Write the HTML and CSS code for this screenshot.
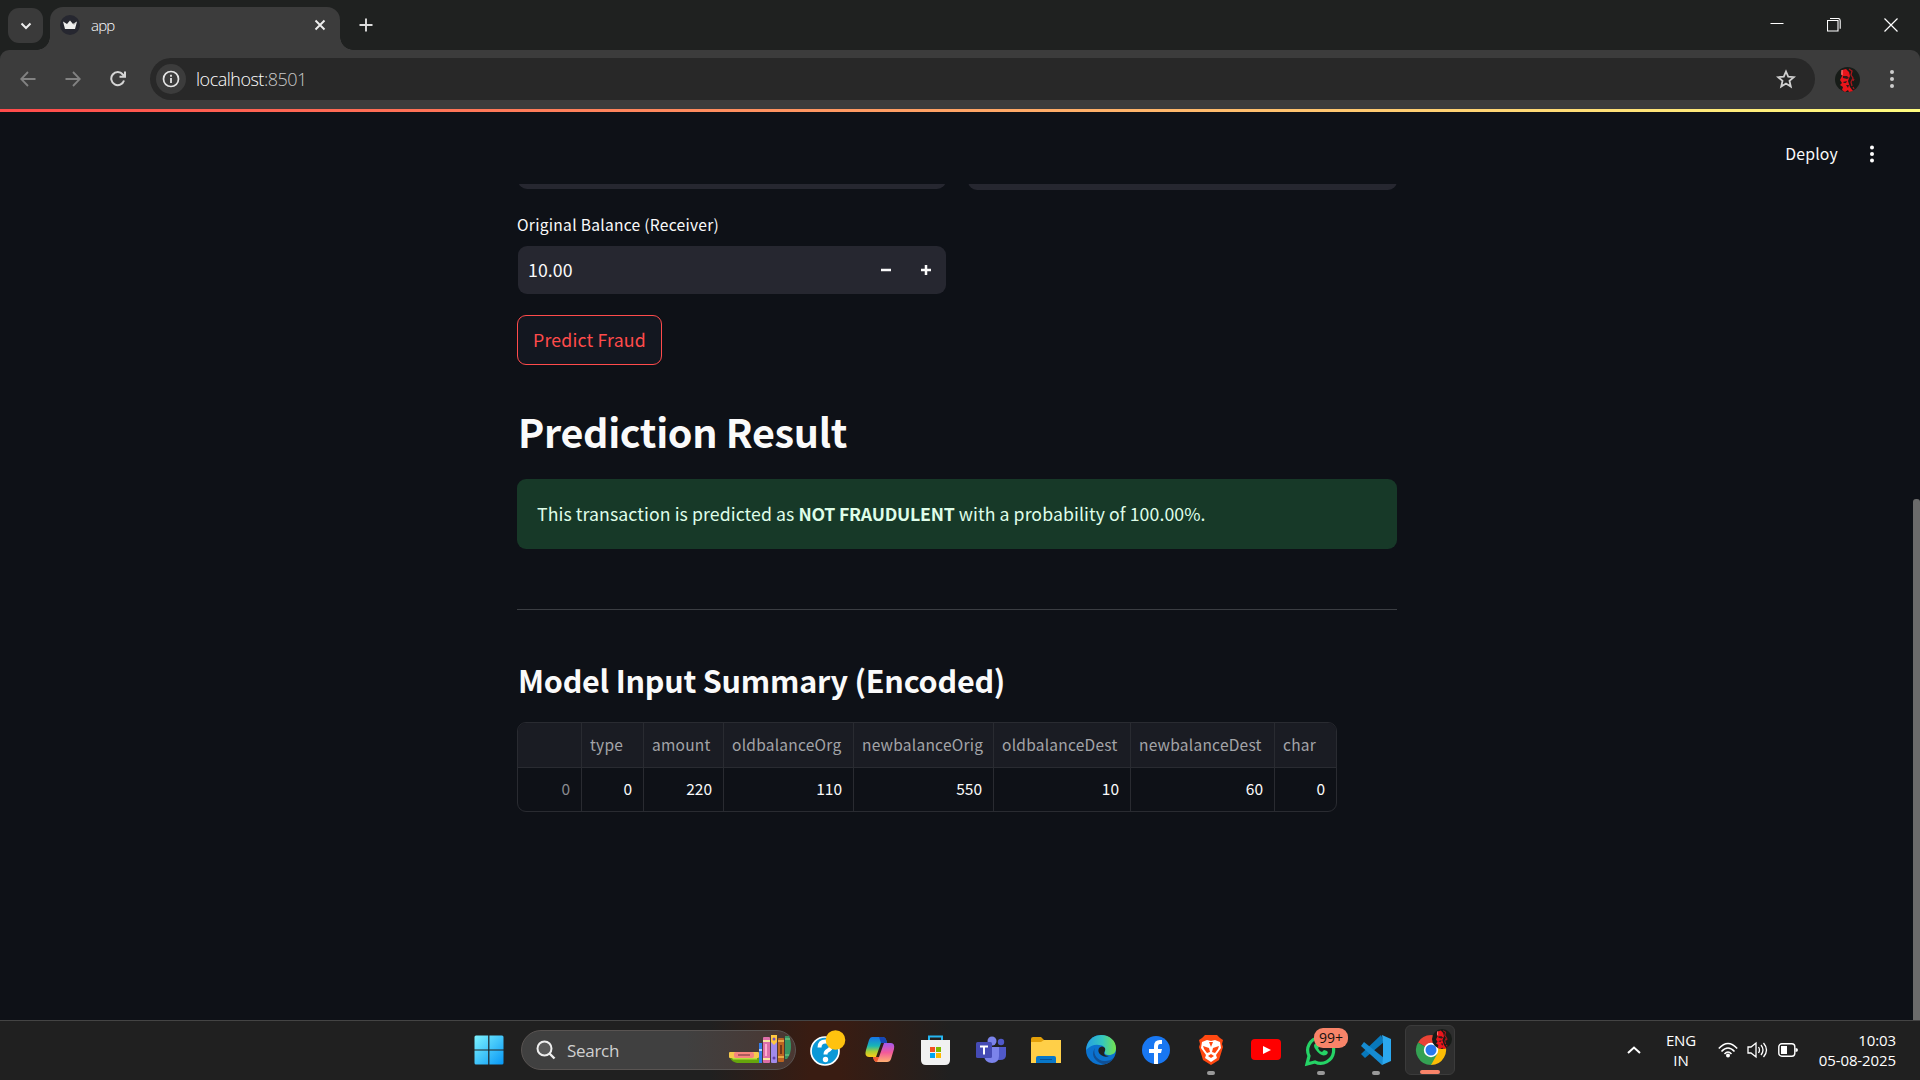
FILE: index.html
```html
<!DOCTYPE html>
<html lang="en">
<head>
<meta charset="utf-8">
<title>app</title>
<link rel="stylesheet" href="styles.css">
</head>
<body>
<header class="tabstrip">
  <button class="tab-search"><svg width="12" height="12" viewBox="0 0 12 12"><path d="M1.5 3.5 6 8l4.500-4.500" fill="none" stroke="#eee" stroke-width="2"/></svg></button>
  <div class="tab">
    <svg class="favicon" width="20" height="20" viewBox="0 0 20 20"><circle cx="10" cy="10" r="10" fill="#262730"/><path d="M3 6.500 7 9l3-3.500L13 9l4-2.500L15 14H5z" fill="#eee"/><path d="M10 5.500 13 9l4-2.500L14 10z" fill="#aaa"/></svg>
    <span class="tab-title">app</span>
    <svg width="12" height="12" viewBox="0 0 12 12"><path d="m1.500 1.500 9 9m0-9-9 9" stroke="#eee" stroke-width="1.900"/></svg>
  </div>
  <svg class="new-tab" width="14" height="14" viewBox="0 0 14 14"><path d="M7 .5v13M.5 7h13" stroke="#ddd" stroke-width="1.900"/></svg>
  <div class="window-controls">
    <svg width="14" height="14" viewBox="0 0 14 14"><path d="M.5 5.500h13" stroke="#fff" fill="none"/></svg>
    <svg width="14" height="14" viewBox="0 0 14 14"><path d="M.5 2.500h10.500v10.500H.5zM3 .5h8q2.200 0 2.200 2.200v8" stroke="#fff" stroke-width="1.100" fill="none"/></svg>
    <svg width="14" height="14" viewBox="0 0 14 14"><path d="m.5.500 13 13m0-13-13 13" stroke="#fff" stroke-width="1.200" fill="none"/></svg>
  </div>
</header>
<div class="toolbar-back">
<nav class="toolbar">
  <svg class="dim" width="16" height="16" viewBox="0 0 16 16"><path d="M15.500 8H1.500M8 1 1.200 8 8 15" fill="none" stroke="currentColor" stroke-width="1.800"/></svg>
  <svg class="dim" width="16" height="16" viewBox="0 0 16 16"><path d="M.5 8h14M8 1l6.800 7L8 15" fill="none" stroke="currentColor" stroke-width="1.800"/></svg>
  <svg width="16" height="16" viewBox="0 0 16 16"><path d="M14 9.500A6.500 6.500 0 1 1 12.800 3.500L14.500 5.300M15 .5v5.300H9.500" fill="none" stroke="#d5d5d5" stroke-width="2"/></svg>
  <div class="omnibox">
    <span class="site-info"><svg width="18" height="18" viewBox="0 0 18 18"><circle cx="9" cy="9" r="7.500" fill="none" stroke="#e4e4e4" stroke-width="1.700"/><path d="M9 8v5M9 4.800v2" stroke="#e4e4e4" stroke-width="1.800"/></svg></span>
    <span class="url">localhost<span class="port">:8501</span></span>
    <svg width="20" height="20" viewBox="0 0 20 20"><path d="m10 2.500 2.200 5.200 5.600.5-4.300 3.700 1.300 5.600-4.800-3-4.800 3 1.300-5.600L2.200 8.200l5.600-.5z" fill="none" stroke="#d0d0d0" stroke-width="1.800"/></svg>
  </div>
  <svg class="avatar" width="25" height="25" viewBox="0 0 25 25"><use href="#face"/></svg>
  <svg class="browser-menu" width="4" height="18" viewBox="0 0 4 18"><g fill="#ccc"><circle cx="2" cy="2" r="2"/><circle cx="2" cy="9" r="2"/><circle cx="2" cy="16" r="2"/></g></svg>
</nav>
</div>
<main class="page">
  <div class="decoration"></div>
  <div class="app-header">
    <span>Deploy</span>
    <svg width="4" height="18" viewBox="0 0 4 18"><g fill="#fff"><circle cx="2" cy="2.500" r="2"/><circle cx="2" cy="9" r="2"/><circle cx="2" cy="15.500" r="2"/></g></svg>
  </div>
  <div class="content">
    <div class="clipped-row"><div class="clipped"></div><div class="clipped second"></div></div>
    <label class="field-label">Original Balance (Receiver)</label>
    <div class="number-input"><span class="value">10.00</span>
      <svg width="10" height="10" viewBox="0 0 10 10"><path d="M0 5h10" stroke="#fafafa" stroke-width="2.500"/></svg>
      <svg width="10" height="10" viewBox="0 0 10 10"><path d="M0 5h10M5 0v10" stroke="#fafafa" stroke-width="2.500"/></svg>
    </div>
    <button class="predict">Predict Fraud</button>
    <h2 class="result-title">Prediction Result</h2>
    <div class="success"><span>This transaction is predicted as <strong>NOT FRAUDULENT</strong> with a probability of 100.00%.</span></div>
    <hr class="rule">
    <h3 class="summary-title">Model Input Summary (Encoded)</h3>
    <div class="table">
      <div class="row head"><span></span><span>type</span><span>amount</span><span>oldbalanceOrg</span><span>newbalanceOrig</span><span>oldbalanceDest</span><span>newbalanceDest</span><span>char</span></div>
      <div class="row data"><span>0</span><span>0</span><span>220</span><span>110</span><span>550</span><span>10</span><span>60</span><span>0</span></div>
    </div>
  </div>
  <div class="scroll-thumb"></div>
</main>
<footer class="taskbar">
  <div class="launcher">
    <svg class="start" width="30" height="30" viewBox="0 0 30 30"><defs><linearGradient id="win" x1="0" y1="0" x2="1" y2="1"><stop stop-color="#7df3ff"/><stop offset="1" stop-color="#0797f5"/></linearGradient></defs><path d="M.5 2q0-1.500 1.500-1.500h12.200v13.900H.5zM15.400.5H28q1.500 0 1.500 1.500v12.400H15.400zM.5 15.600h13.700v13.900H2q-1.500 0-1.500-1.500zM15.400 15.600h14.100V28q0 1.500-1.500 1.500H15.400z" fill="url(#win)"/></svg>
    <div class="search">
      <svg width="20" height="20" viewBox="0 0 20 20"><circle cx="8.500" cy="8.500" r="7" fill="#5a5a5a" stroke="#eee" stroke-width="2"/><path d="m13.500 13.500 5 5" stroke="#eee" stroke-width="2.400"/></svg>
      <span>Search</span>
      <svg class="books" width="63" height="30" viewBox="0 0 63 30"><rect x="0" y="17" width="30" height="6" rx="1" fill="#f5c94d"/><rect x="5" y="17" width="20" height="6" rx="2" fill="#f5857f"/><rect x="9" y="19" width="12" height="2" fill="#ad5a5d"/><path d="M1 23h29v5H8q-5-1-7-5z" fill="#65a50c"/><path d="M3 23h25v1.500H4z" fill="#b4df3d"/><rect x="30" y="8" width="3" height="20" fill="#347de8"/><rect x="30" y="14" width="3" height="2" fill="#acd0ff"/><rect x="34" y="2" width="7" height="26" rx="1" fill="#dd6fa9"/><path d="M34 6h7M34 24h7" stroke="#fbe6a0" stroke-width="2"/><path d="M37 9v12" stroke="#ffacd0" stroke-width="2"/><rect x="42" y="0" width="6" height="28" rx="1" fill="#a18aeb"/><path d="M42 0h6v7l-3 3-3-3z" fill="#ffc83e"/><circle cx="45" cy="4" r="1.500" fill="#7654bc"/><circle cx="45" cy="23" r="1.500" fill="#6342a7"/><rect x="49" y="3" width="6" height="24" rx="1" fill="#bd6420"/><path d="M49 6h6M49 22h6" stroke="#f5bd50" stroke-width="1.500"/><path d="M51 10h2v9h-2z" fill="#733719"/><path d="M56 1h4q2 4 2 11t-4 12h-2z" fill="#389362"/><path d="M56 4h5M56 20h4" stroke="#82d48d"/></svg>
    </div>
    <div class="apps">
      <div class="app"><svg width="36" height="36" viewBox="0 0 36 36"><circle cx="18" cy="19" r="14" fill="#0b98d7" stroke="#fff" stroke-width="1.700"/><path d="M12.500 15.500q0-6 6-6t5.500 5q0 2.500-3.500 4.200-2 1-2 3.800" fill="none" stroke="#fff" stroke-width="4"/><circle cx="18.500" cy="27.500" r="2.700" fill="#fff"/><circle cx="28.500" cy="8" r="9.800" fill="#ffc20e"/></svg></div>
      <div class="app"><svg width="36" height="36" viewBox="0 0 36 36"><defs><linearGradient id="ca" x1="0" y1="0" x2="0" y2="1"><stop stop-color="#1674e8"/><stop offset=".45" stop-color="#18b6b5"/><stop offset=".72" stop-color="#a8ce35"/><stop offset="1" stop-color="#ffcb18"/></linearGradient><linearGradient id="cb" x1="0" y1="0" x2="0" y2="1"><stop stop-color="#a358ef"/><stop offset=".5" stop-color="#f35a9a"/><stop offset="1" stop-color="#ffb071"/></linearGradient></defs><path d="M10 5h11q3 0 4 6h-6l-5 14H7q-5 0-3-7l3-10q1-3 3-3z" fill="url(#ca)"/><path d="M17 5h4q3 0 4 6h-6z" fill="#1646b5"/><path d="M22 11h7q4 0 3 6l-3 10q-1 3-4 3H15q-3 0-4-5h6z" fill="url(#cb)"/><path d="M11 25h6l-2 5q-3 0-4-5z" fill="#f05b31"/></svg></div>
      <div class="app"><svg width="36" height="36" viewBox="0 0 36 36"><path d="M12 10V4.500h13V10" fill="none" stroke="#25b6f1" stroke-width="2"/><path d="M4 8h29v20q0 5-5 5H9q-5 0-5-5z" fill="#f1f1f1"/><path fill="#f25022" d="M13 15h5v5h-5z"/><path fill="#7fba00" d="M19 15h5v5h-5z"/><path fill="#00a4ef" d="M13 21h5v5h-5z"/><path fill="#ffb900" d="M19 21h5v5h-5z"/></svg></div>
      <div class="app"><svg width="36" height="36" viewBox="0 0 36 36"><circle cx="20" cy="9" r="4.500" fill="#7b83eb"/><circle cx="29" cy="10" r="3.200" fill="#5059c9"/><path d="M23 15h11v8q0 5-6 5h-5z" fill="#5059c9"/><path d="M12 15h15v9q0 7-7 7t-8-7z" fill="#7b83eb"/><rect x="4" y="10" width="16" height="16" rx="1.500" fill="#454bb5"/><path d="M8 14.500h8M12 14v8.500" stroke="#fff" stroke-width="2"/></svg></div>
      <div class="app"><svg width="36" height="36" viewBox="0 0 36 36"><path d="M4 7q0-2 2-2h8l3 3v4H4z" fill="#e3a009"/><path d="M4 10h10l3-2h17v23H4z" fill="#ffcf48"/><path d="M9 31v-5q0-2 2-2h16q2 0 2 2v5z" fill="#0877c9"/><path d="M13 27.500h12" stroke="#075196"/></svg></div>
      <div class="app"><svg width="36" height="36" viewBox="0 0 36 36"><defs><linearGradient id="eg"><stop stop-color="#249ee5"/><stop offset=".55" stop-color="#35c7bd"/><stop offset="1" stop-color="#75e34c"/></linearGradient></defs><circle cx="19" cy="18" r="15" fill="#0b72cf"/><path d="M5 13Q9 3 19 3c9 0 15 6 15 13 0 5-3 7-7 7-3 0-5-1-4-3q1-7-6-7-7-1-13 5z" fill="url(#eg)"/><path d="M13 16c-3 7 4 13 9 13 5 0 8-1 10-4-5 9-13 9-19 2-3-4-2-8 0-11z" fill="#104f94"/><path d="M17 16q3-3 6 0 1 2-1 5 0 3 5 3-4 2-8-1-4-3-2-7z" fill="#202020"/></svg></div>
      <div class="app"><svg width="36" height="36" viewBox="0 0 36 36"><circle cx="19" cy="18" r="14" fill="#1877f2"/><path d="M17 32V21h-5v-4h5v-3q0-6 6-6h2v4h-2q-2 0-2 3v2h4l-1 4h-3v11z" fill="#fff"/></svg></div>
      <div class="app running"><svg width="36" height="36" viewBox="0 0 36 36"><path d="M13 3h12l3 3 3 2-1 4 1 3-4 13-8 5-8-5-4-13 1-3-1-4 3-2z" fill="#ff4811"/><path d="m10 10 5-2 4 1 4-1 5 2 1 6-5 7 1 3-6 4-6-4 1-3-5-7z" fill="#fff"/><path d="m11 14 6 2 1 4-3 1-3-4m15-3-6 2-1 4 3 1 3-4M16 24l3-2 3 2-3 2zM17 10h4l-2 5z" fill="#ff4811"/></svg></div>
      <div class="app"><svg width="36" height="36" viewBox="0 0 36 36"><rect x="4" y="7" width="30" height="21" rx="4" fill="#f00"/><path d="m16 14 8 4-8 4z" fill="#fff"/></svg></div>
      <div class="app running"><svg width="36" height="36" viewBox="0 0 36 36"><path d="m5 32 2-8A13 13 0 1 1 13 30z" fill="none" stroke="#25d366" stroke-width="3.200"/><path d="M14 11q-4 2 0 7 5 7 10 5 3-2 1-4l-3-1-2 2q-3-1-4-4l2-2-2-3z" fill="#25d366"/></svg><span class="badge">99+</span></div>
      <div class="app running"><svg width="36" height="36" viewBox="0 0 36 36"><path d="m4 22 20-19 3 7L8 26z" fill="#0878bb"/><path d="m4 14 3-4 20 16-2 7z" fill="#168bd1"/><path d="m25 3 9 4v22l-9 4 1-7V10z" fill="#2ba8ef"/></svg></div>
      <div class="app active"><svg width="36" height="36" viewBox="0 0 36 36"><path d="M19 18 6 10.500A15 15 0 0 1 32 10.500z" fill="#ea4335"/><path d="M19 18 32 10.500A15 15 0 0 1 19 33z" fill="#fbbc05"/><path d="M6 10.500A15 15 0 0 0 19 33l6.500-11.500L19 18z" fill="#34a153"/><circle cx="19" cy="18" r="7.200" fill="#fff"/><circle cx="19" cy="18" r="5.500" fill="#2878ed"/></svg>
        <svg class="profile" width="20" height="20" viewBox="0 0 25 25"><g id="face"><circle cx="12.500" cy="12.500" r="12.500" fill="#171c18"/><path d="m7 3 4-1 3 3 1 4-2 5 2 6 3 4-4 1-1-2-3 2-3-2 1-3-3-2 2-2-2-3 2-4-1-3z" fill="#e9151b"/><path d="M8 9h4l2 2-2 1-4-1zM8 15l4-1-1 2H9zM11 18h3l-1 3z" fill="#33191a"/><path d="m14 2 3 2-1 4 2 3-2 4 1 4M19 12l-1 2M18 20l1 2" stroke="#a7161b" stroke-width="1.300" fill="none"/><path d="M7 3v5" stroke="#ff9691"/></g></svg></div>
    </div>
  </div>
  <div class="tray">
    <svg class="chevron" width="14" height="8" viewBox="0 0 14 8"><path d="m1 7 6-5.500L13 7" fill="none" stroke="#fff" stroke-width="2"/></svg>
    <span class="lang">ENG<br>IN</span>
    <svg class="wifi" width="20" height="16" viewBox="0 0 20 16"><path d="M.8 6.500q9.200-10 18.400 0M3.500 9.500q6.500-7 13 0M6.500 12q3.500-4 7 0" fill="none" stroke="#fff" stroke-width="1.500"/><circle cx="10" cy="13.500" r="2" fill="#fff"/></svg>
    <svg class="sound" width="21" height="18" viewBox="0 0 21 18"><path d="M1 6h3l5-4v14l-5-4H1zM11.500 6q2 3 0 6M14 4q4 5 0 10M16.500 2q6 7 0 14" fill="none" stroke="#fff" stroke-width="1.300"/></svg>
    <svg class="battery" width="20" height="14" viewBox="0 0 20 14"><rect x=".8" y=".8" width="16" height="12.400" rx="3" fill="none" stroke="#fff" stroke-width="1.400"/><path d="M3 3h6v8H3z" fill="#fff"/><path d="M17.500 5q2.500 0 2.500 2t-2.500 2z" fill="#fff"/></svg>
    <span class="clock">10:03<br>05-08-2025</span>
  </div>
</footer>
</body>
</html>
```

FILE: styles.css
```css
* { box-sizing: border-box; }
body { margin: 0; width: 1920px; height: 1080px; overflow: hidden; background: #0e1117; color: #fafafa; font-family: "Noto Sans CJK SC", "Noto Sans", sans-serif; display: flex; flex-direction: column; }
svg { display: block; flex: none; }
button { padding: 0; border: 0; font: inherit; }

.tabstrip { height: 50px; flex: none; background: #1f2120; display: flex; align-items: flex-start; padding: 7px 22px 0 8px; font-family: "Open Sans", sans-serif; }
.tab-search { width: 35px; height: 35px; margin-top: 1px; border-radius: 11px; background: #3a3a3a; display: grid; place-items: center; }
.tab { position: relative; margin-left: 7px; width: 290px; height: 43px; background: #3c3c3c; border-radius: 13px 13px 0 0; display: flex; align-items: center; padding: 0 14px 8px 10px; }
.tab::before, .tab::after { content: ""; position: absolute; bottom: 0; width: 13px; height: 13px; }
.tab::before { left: -13px; background: radial-gradient(circle at 0 0, transparent 12.5px, #3c3c3c 13px); }
.tab::after { right: -13px; background: radial-gradient(circle at 100% 0, transparent 12.500px, #3c3c3c 13px); }
.tab-title { flex: 1; margin-left: 11px; font-size: 15px; font-weight: 300; line-height: 20px; letter-spacing: -.8px; color: #fff; }
.new-tab { margin: 11px 0 0 19px; }
.window-controls { margin: 11px 0 0 auto; display: flex; gap: 43px; }

.toolbar-back { flex: none; background: #1f2120; }
.toolbar { height: 59px; background: #3c3c3c; border-radius: 9px 9px 0 0; padding: 8px 26px 9px 20px; display: flex; align-items: center; color: #ddd; }
.toolbar > svg + svg { margin-left: 29px; }
.dim { color: #828282; }
.omnibox { margin-left: 24px; width: 1665px; height: 42px; border-radius: 21px; background: #282828; display: flex; align-items: center; padding: 0 19px 0 6px; }
.site-info { width: 30px; height: 30px; border-radius: 50%; background: #3c3c3c; display: grid; place-items: center; }
.url { flex: 1; margin-left: 10px; font: 300 18px "Open Sans", sans-serif; letter-spacing: -.5px; color: #fff; }
.port { color: #c8c8c8; }
.avatar { margin-left: 20px; }
.toolbar > .browser-menu { margin-left: auto; }

.page { position: relative; height: 911px; flex: none; }
.decoration { height: 3px; background: linear-gradient(90deg, #ff4b4b, #fffd80); }
.app-header { height: 72px; display: flex; justify-content: flex-end; align-items: center; gap: 32px; padding: 11px 46px 0 0; font-size: 15.800px; letter-spacing: .2px; }
.app-header span { padding-bottom: 1px; }
.content { width: 880px; margin-left: 517px; }
.clipped-row { display: flex; align-items: flex-end; gap: 22px; height: 6px; overflow: hidden; }
.clipped { width: 428px; height: 48px; flex: none; margin: 0 0 1px 1px; background: #262730; border-radius: 9px; }
.clipped.second { margin: 0; width: 429px; }
.field-label { display: block; margin-top: 24px; height: 23px; line-height: 21px; font-size: 15.600px; letter-spacing: .270px; }
.number-input { width: 428px; height: 48px; margin: 9px 0 0 1px; padding: 0 15px 0 10px; border-radius: 9px; background: #262730; display: flex; align-items: center; gap: 30px; font-size: 17.700px; }
.value { flex: 1; padding-bottom: 2px; letter-spacing: .1px; }
.predict { display: block; width: 145px; height: 50px; margin-top: 21px; padding-bottom: 2px; border: 1px solid #ff4b4b; border-radius: 9px; background: #131720; color: #ff4b4b; font-size: 17.700px; letter-spacing: .2px; }
.result-title { margin: 36px 0 0; height: 62px; line-height: 60px; font-size: 39.500px; font-weight: 600; letter-spacing: -.330px; padding-left: 1px; }
.success { margin-top: 16px; height: 70px; border-radius: 9px; background: #173928; color: #dffde9; padding: 0 0 2px 20px; display: flex; align-items: center; font-size: 17.700px; letter-spacing: .080px; white-space: pre; }
.success strong { letter-spacing: -.220px; }
.rule { margin: 60px 0 0; height: 1px; border: 0; background: #3b3e43; }
.summary-title { margin: 44px 0 0; height: 54px; line-height: 52px; font-size: 30.500px; font-weight: 600; letter-spacing: -.220px; padding-left: 1px; }
.table { margin-top: 14px; width: 820px; height: 90px; border: 1px solid #292b31; border-radius: 9px; overflow: hidden; font-size: 15.500px; }
.row { display: grid; grid-template-columns: 64px 62px 80px 130px 140px 137px 144px 61px; height: 45px; line-height: 42px; }
.row span { padding: 0 0 0 8px; border-right: 1px solid #292b31; white-space: nowrap; }
.row span:last-child { border: 0; }
.head { background: #1a1c23; color: #a3a4a8; border-bottom: 1px solid #292b31; letter-spacing: .240px; }
.data { text-align: right; line-height: 41px; }
.row.data span { padding-right: 11px; }
.data span:first-child { color: #8a8b8f; }
.scroll-thumb { position: absolute; right: 0; top: 390px; width: 7px; height: 521px; background: #6b6b6b; border-radius: 3px 3px 0 0; }

.taskbar { height: 60px; flex: none; display: flex; justify-content: space-between; border-top: 1px solid #444; background: linear-gradient(90deg, #202020 710px, #391c12 810px, #391c12 840px, #202020 950px); font-family: "Open Sans", sans-serif; }
.launcher { display: flex; align-items: center; margin-left: 474px; padding-bottom: 1px; }
.search { margin-left: 17px; width: 275px; height: 40px; border-radius: 20px; border: 1px solid #595452; background: linear-gradient(90deg, #404040 60%, #4b3732); display: flex; align-items: center; padding: 0 3px 0 14px; font-size: 17px; letter-spacing: -.3px; color: #d0d0d0; }
.search span { flex: 1; margin-left: 11px; }
.apps { display: flex; margin-left: 4px; gap: 5px; }
.app { position: relative; width: 50px; height: 50px; border-radius: 6px; display: grid; place-items: center; }
.app > svg:first-child { position: relative; overflow: visible; }
.running::after, .active::after { content: ""; position: absolute; bottom: 0; left: 22px; width: 8px; height: 4px; border-radius: 2px; background: #999; }
.active { background: #2e2e2e; border: 1px solid #3b3b3b; }
.active::after { left: 14px; width: 20px; background: #f88469; }
.profile { position: absolute; right: 2px; top: 3px; }
.badge { position: absolute; left: 19px; top: 3px; width: 34px; height: 20px; border-radius: 9px; background: #f88469; color: #16100e; font-size: 14px; line-height: 20px; text-align: center; }
.tray { display: flex; align-items: center; margin-right: 24px; padding-bottom: 2px; font-size: 15px; line-height: 20px; letter-spacing: -.1px; color: #fff; }
.lang { width: 40px; margin-left: 20px; text-align: center; }
.wifi { margin-left: 17px; }
.sound { margin-left: 9px; }
.battery { margin-left: 10px; }
.clock { margin-left: 19px; width: 79px; text-align: right; white-space: nowrap; }
```
